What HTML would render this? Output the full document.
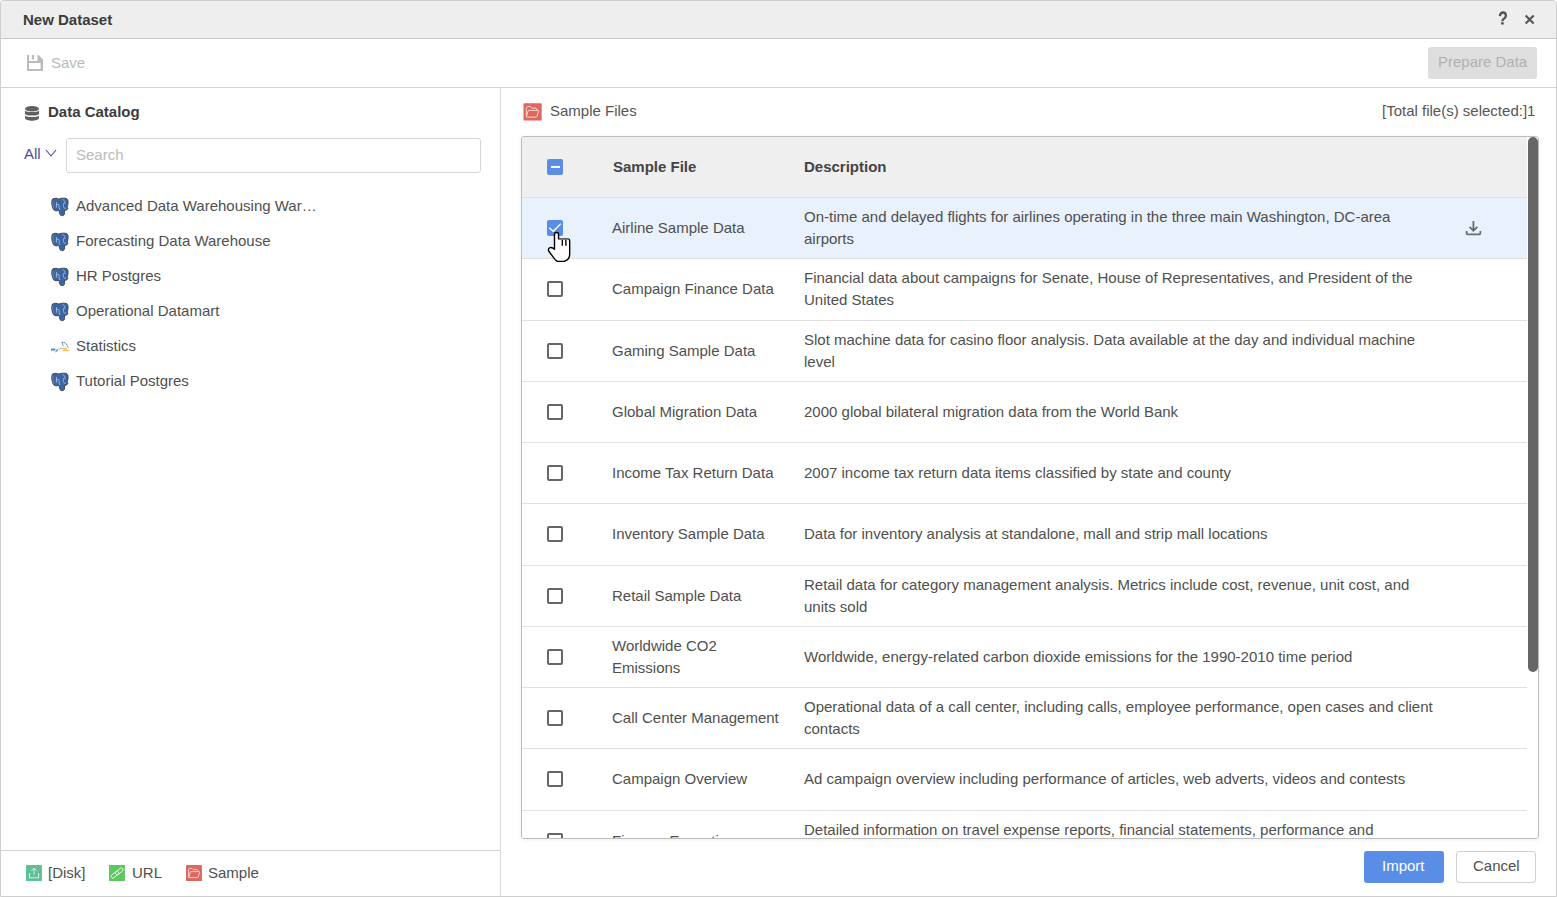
<!DOCTYPE html>
<html><head><meta charset="utf-8">
<style>
*{box-sizing:border-box;margin:0;padding:0}
html,body{width:1557px;height:897px;overflow:hidden;background:#fff;font-family:"Liberation Sans",sans-serif;color:#4f4f4f;font-size:15px}
.a{position:absolute;white-space:nowrap}
.t15{font-size:15px;line-height:17px}
.ico{position:absolute}
</style></head><body>
<div class="a" style="left:0;top:0;width:1557px;height:897px;border:1px solid #cecece;border-radius:3px 4px 0 0;background:#fff"></div>
<div class="a" style="left:1px;top:1px;width:1555px;height:37px;background:#eeeeee;border-radius:3px 3px 0 0"></div>
<div class="a" style="left:1px;top:38px;width:1555px;height:1px;background:#c9c9c9"></div>
<div class="a t15" style="left:23px;top:11px;font-weight:bold;color:#3b3b3b">New Dataset</div>
<!-- help / close -->
<svg class="ico" style="left:1497px;top:0px" width="60" height="60" viewBox="0 0 897 897"><path d="M42 240 C48 202 75 187 90 187 C120 187 133 210 133 236 C133 264 110 276 96 286 C84 294 81 302 81 318" stroke="#555" stroke-width="34" fill="none"/><circle cx="81" cy="350" r="21" fill="#555"/><path d="M428 232 L548 352 M548 232 L428 352" stroke="#555" stroke-width="32"/></svg>
<!-- toolbar -->
<svg class="ico" style="left:27px;top:55px" width="16" height="16" viewBox="0 0 16 16"><path d="M0 0 H11.5 L16 4.5 V16 H0 Z M2 0 V6 H10.5 V0 Z M4.8 0 V4.6 H7 V0 Z M2 8 V14 H13.6 V8 Z" fill="#bbb" fill-rule="evenodd"/></svg>
<div class="a t15" style="left:51px;top:54px;color:#bbb">Save</div>
<div class="a" style="left:1428px;top:47px;width:109px;height:32px;background:#dedede;border-radius:3px"></div>
<div class="a t15" style="left:1438px;top:53px;color:#b0b0b0">Prepare Data</div>
<div class="a" style="left:1px;top:87px;width:1555px;height:1px;background:#d3d3d3"></div>
<!-- left panel -->
<div class="a" style="left:500px;top:88px;width:1px;height:808px;background:#dcdcdc"></div>
<svg class="ico" style="left:25px;top:106px" width="14" height="15" viewBox="0 0 14 15"><ellipse cx="7" cy="2.8" rx="7" ry="2.8" fill="#606060"/><path d="M0 4.5 C1 6.5 13 6.5 14 4.5 V8 C13 10 1 10 0 8 Z" fill="#606060"/><path d="M0 9.5 C1 11.5 13 11.5 14 9.5 V12.2 C13 15.5 1 15.5 0 12.2 Z" fill="#606060"/></svg>
<div class="a t15" style="left:48px;top:103px;font-weight:bold;color:#3c3c3c">Data Catalog</div>
<div class="a t15" style="left:24px;top:145px;color:#4b4b9b">All</div>
<svg class="ico" style="left:44.5px;top:148.5px" width="12" height="9" viewBox="0 0 12 9"><path d="M1 1 L6 7 L11 1" stroke="#4b4b9b" stroke-width="1.1" fill="none"/></svg>
<div class="a" style="left:66px;top:138px;width:415px;height:35px;border:1px solid #d6d6d6;border-radius:3px"></div>
<div class="a t15" style="left:76px;top:146px;color:#bbb">Search</div>

<div class="a" style="left:51px;top:197px;width:18px;height:18px"><svg class="ico" style="left:-7px;top:-5px" width="30" height="30" viewBox="0 0 897 897"><path d="M250 215 C285 182 400 178 440 212 C480 188 600 170 680 198 C722 220 732 300 708 400 C698 440 692 468 716 500 C692 540 642 552 612 552 L618 640 C612 692 572 712 530 706 C482 700 466 660 460 620 L455 545 C420 562 340 582 290 532 C240 472 210 300 250 215 Z" fill="#3b65a2" stroke="#3d3d3d" stroke-width="26"/><path d="M372 300 V470 M374 395 C394 358 448 358 452 405 V470 C452 500 470 520 480 540" stroke="#c0d0ea" stroke-width="22" fill="none"/><path d="M552 232 C630 245 640 300 592 338 C570 356 574 410 586 466 M598 482 H660 M612 345 H648" stroke="#b8cae6" stroke-width="22" fill="none"/><path d="M272 255 C260 320 266 420 298 500" stroke="#7a98c8" stroke-width="20" fill="none"/></svg></div>
<div class="a t15" style="left:76px;top:197px;color:#4f4f4f">Advanced Data Warehousing War…</div>
<div class="a" style="left:51px;top:232px;width:18px;height:18px"><svg class="ico" style="left:-7px;top:-5px" width="30" height="30" viewBox="0 0 897 897"><path d="M250 215 C285 182 400 178 440 212 C480 188 600 170 680 198 C722 220 732 300 708 400 C698 440 692 468 716 500 C692 540 642 552 612 552 L618 640 C612 692 572 712 530 706 C482 700 466 660 460 620 L455 545 C420 562 340 582 290 532 C240 472 210 300 250 215 Z" fill="#3b65a2" stroke="#3d3d3d" stroke-width="26"/><path d="M372 300 V470 M374 395 C394 358 448 358 452 405 V470 C452 500 470 520 480 540" stroke="#c0d0ea" stroke-width="22" fill="none"/><path d="M552 232 C630 245 640 300 592 338 C570 356 574 410 586 466 M598 482 H660 M612 345 H648" stroke="#b8cae6" stroke-width="22" fill="none"/><path d="M272 255 C260 320 266 420 298 500" stroke="#7a98c8" stroke-width="20" fill="none"/></svg></div>
<div class="a t15" style="left:76px;top:232px;color:#4f4f4f">Forecasting Data Warehouse</div>
<div class="a" style="left:51px;top:267px;width:18px;height:18px"><svg class="ico" style="left:-7px;top:-5px" width="30" height="30" viewBox="0 0 897 897"><path d="M250 215 C285 182 400 178 440 212 C480 188 600 170 680 198 C722 220 732 300 708 400 C698 440 692 468 716 500 C692 540 642 552 612 552 L618 640 C612 692 572 712 530 706 C482 700 466 660 460 620 L455 545 C420 562 340 582 290 532 C240 472 210 300 250 215 Z" fill="#3b65a2" stroke="#3d3d3d" stroke-width="26"/><path d="M372 300 V470 M374 395 C394 358 448 358 452 405 V470 C452 500 470 520 480 540" stroke="#c0d0ea" stroke-width="22" fill="none"/><path d="M552 232 C630 245 640 300 592 338 C570 356 574 410 586 466 M598 482 H660 M612 345 H648" stroke="#b8cae6" stroke-width="22" fill="none"/><path d="M272 255 C260 320 266 420 298 500" stroke="#7a98c8" stroke-width="20" fill="none"/></svg></div>
<div class="a t15" style="left:76px;top:267px;color:#4f4f4f">HR Postgres</div>
<div class="a" style="left:51px;top:302px;width:18px;height:18px"><svg class="ico" style="left:-7px;top:-5px" width="30" height="30" viewBox="0 0 897 897"><path d="M250 215 C285 182 400 178 440 212 C480 188 600 170 680 198 C722 220 732 300 708 400 C698 440 692 468 716 500 C692 540 642 552 612 552 L618 640 C612 692 572 712 530 706 C482 700 466 660 460 620 L455 545 C420 562 340 582 290 532 C240 472 210 300 250 215 Z" fill="#3b65a2" stroke="#3d3d3d" stroke-width="26"/><path d="M372 300 V470 M374 395 C394 358 448 358 452 405 V470 C452 500 470 520 480 540" stroke="#c0d0ea" stroke-width="22" fill="none"/><path d="M552 232 C630 245 640 300 592 338 C570 356 574 410 586 466 M598 482 H660 M612 345 H648" stroke="#b8cae6" stroke-width="22" fill="none"/><path d="M272 255 C260 320 266 420 298 500" stroke="#7a98c8" stroke-width="20" fill="none"/></svg></div>
<div class="a t15" style="left:76px;top:302px;color:#4f4f4f">Operational Datamart</div>
<div class="a" style="left:51px;top:337px;width:18px;height:18px"><svg class="ico" style="left:-7px;top:-5px" width="30" height="30" viewBox="0 0 897 897"><path d="M215 565 L238 490 L272 555 L300 490 L322 565" stroke="#4f84b2" stroke-width="28" fill="none"/><path d="M345 505 L385 565 M425 500 L380 585 C370 600 350 598 335 590" stroke="#4f84b2" stroke-width="26" fill="none"/><path d="M455 530 C470 480 525 465 545 500 M560 515 C590 470 650 490 630 540 C620 560 590 560 570 545 M660 470 L665 550 L745 552" stroke="#ebb055" stroke-width="30" fill="none"/><path d="M520 310 C600 290 665 330 695 405 C705 432 712 452 722 470 M550 330 C558 380 568 412 590 432" stroke="#5b8fba" stroke-width="28" fill="none"/></svg></div>
<div class="a t15" style="left:76px;top:337px;color:#4f4f4f">Statistics</div>
<div class="a" style="left:51px;top:372px;width:18px;height:18px"><svg class="ico" style="left:-7px;top:-5px" width="30" height="30" viewBox="0 0 897 897"><path d="M250 215 C285 182 400 178 440 212 C480 188 600 170 680 198 C722 220 732 300 708 400 C698 440 692 468 716 500 C692 540 642 552 612 552 L618 640 C612 692 572 712 530 706 C482 700 466 660 460 620 L455 545 C420 562 340 582 290 532 C240 472 210 300 250 215 Z" fill="#3b65a2" stroke="#3d3d3d" stroke-width="26"/><path d="M372 300 V470 M374 395 C394 358 448 358 452 405 V470 C452 500 470 520 480 540" stroke="#c0d0ea" stroke-width="22" fill="none"/><path d="M552 232 C630 245 640 300 592 338 C570 356 574 410 586 466 M598 482 H660 M612 345 H648" stroke="#b8cae6" stroke-width="22" fill="none"/><path d="M272 255 C260 320 266 420 298 500" stroke="#7a98c8" stroke-width="20" fill="none"/></svg></div>
<div class="a t15" style="left:76px;top:372px;color:#4f4f4f">Tutorial Postgres</div>

<div class="a" style="left:1px;top:850px;width:499px;height:1px;background:#d3d3d3"></div>
<svg class="ico" style="left:22px;top:861px" width="24" height="24" viewBox="0 0 897 897"><rect x="150" y="148" width="595" height="597" rx="18" fill="#5fbf96"/><path d="M280 450 V625 H620 V450" stroke="#d9f1e5" stroke-width="38" fill="none"/><path d="M450 515 V290 M348 362 L450 270 L552 362" stroke="#d9f1e5" stroke-width="36" fill="none"/></svg>
<div class="a t15" style="left:48px;top:864px">[Disk]</div>
<svg class="ico" style="left:105px;top:861px" width="24" height="24" viewBox="0 0 897 897"><rect x="150" y="148" width="595" height="597" rx="10" fill="#5dc85f"/><g fill="none" stroke="#e4f6e4" stroke-width="34"><rect x="205" y="447" width="330" height="130" rx="65" transform="rotate(-38 370 512)"/><rect x="365" y="323" width="330" height="130" rx="65" transform="rotate(-38 530 388)"/></g></svg>
<div class="a t15" style="left:132px;top:864px">URL</div>
<svg class="ico" style="left:182px;top:861px" width="24" height="24" viewBox="0 0 897 897"><rect x="150" y="148" width="595" height="597" rx="18" fill="#df675d"/><g fill="none" stroke="#f8dcd8" stroke-width="34"><path d="M245 600 V335 C245 300 262 282 300 282 H380 L420 322 H560 C580 322 590 335 590 352 V385"/><path d="M250 612 L312 415 C316 402 324 398 338 398 H640 C660 398 664 410 660 425 L602 600 C598 612 590 620 575 620 H262 C252 620 248 615 250 612 Z"/></g></svg>
<div class="a t15" style="left:208px;top:864px">Sample</div>
<!-- right panel -->
<svg class="ico" style="left:520px;top:100px" width="25" height="24" viewBox="0 0 934 897"><rect x="130" y="125" width="680" height="640" rx="22" fill="#df675d"/><g fill="none" stroke="#f8dcd8" stroke-width="36"><path d="M235 610 V330 C235 280 270 240 320 240 H380 L440 305 H600 C620 305 630 322 630 342 V385"/><path d="M240 628 L300 412 C305 396 316 390 332 390 H680 C700 390 706 405 700 422 L632 610 C624 630 612 640 592 640 H254 C244 640 238 635 240 628 Z"/></g></svg>
<div class="a t15" style="left:550px;top:102px;color:#555">Sample Files</div>
<div class="a t15" style="left:1382px;top:102px;color:#555">[Total file(s) selected:]1</div>
<div class="a" style="left:521px;top:136px;width:1018px;height:703px;border:1px solid #bdbdbd;border-radius:3px;overflow:hidden;box-shadow:0 1px 4px rgba(0,0,0,0.07)">
<div class="a" style="left:0;top:0;width:1005px;height:61px;background:#efefef;border-bottom:1px solid #e0e0e0"></div>

<div class="a" style="left:25px;top:22px;width:16px;height:16px;background:#5a8de6;border-radius:2px"><div class="a" style="left:3.5px;top:7px;width:9px;height:2px;background:#fff"></div></div>
<div class="a t15" style="left:91px;top:21px;font-weight:bold;color:#444">Sample File</div>
<div class="a t15" style="left:282px;top:21px;font-weight:bold;color:#444">Description</div>
<div class="a" style="left:0;top:61px;width:1005px;height:61px;background:#e9f1fc;border-bottom:1px solid #e0e0e0"></div>
<div class="a" style="left:25px;top:83px;width:16px;height:16px;background:#5a8de6;border-radius:2px"><svg class="ico" style="left:-7px;top:-6px" width="36" height="52" viewBox="0 0 621 897"><path d="M158 238 L230 298 L358 168" stroke="#fff" stroke-width="22" fill="none"/></svg></div>
<div class="a" style="left:90px;top:80px;line-height:22px;color:#4f4f4f">Airline Sample Data</div>
<div class="a" style="left:282px;top:69px;line-height:22px;color:#4f4f4f">On-time and delayed flights for airlines operating in the three main Washington, DC-area<br>airports</div>
<svg class="ico" style="left:933px;top:73px" width="40" height="35" viewBox="0 0 1025 897"><path d="M472 285 V515 M372 435 L472 530 L572 435" stroke="#686b70" stroke-width="46" fill="none"/><path d="M298 540 V598 C298 615 310 627 327 627 H620 C637 627 650 615 650 598 V540" stroke="#686b70" stroke-width="46" fill="none"/></svg>
<div class="a" style="left:0;top:122px;width:1005px;height:62px;background:#fff;border-bottom:1px solid #e0e0e0"></div>
<div class="a" style="left:25px;top:144px;width:16px;height:16px;border:2px solid #666;border-radius:2px"></div>
<div class="a" style="left:90px;top:141px;line-height:22px;color:#4f4f4f">Campaign Finance Data</div>
<div class="a" style="left:282px;top:130px;line-height:22px;color:#4f4f4f">Financial data about campaigns for Senate, House of Representatives, and President of the<br>United States</div>
<div class="a" style="left:0;top:184px;width:1005px;height:61px;background:#fff;border-bottom:1px solid #e0e0e0"></div>
<div class="a" style="left:25px;top:206px;width:16px;height:16px;border:2px solid #666;border-radius:2px"></div>
<div class="a" style="left:90px;top:203px;line-height:22px;color:#4f4f4f">Gaming Sample Data</div>
<div class="a" style="left:282px;top:192px;line-height:22px;color:#4f4f4f">Slot machine data for casino floor analysis. Data available at the day and individual machine<br>level</div>
<div class="a" style="left:0;top:245px;width:1005px;height:61px;background:#fff;border-bottom:1px solid #e0e0e0"></div>
<div class="a" style="left:25px;top:267px;width:16px;height:16px;border:2px solid #666;border-radius:2px"></div>
<div class="a" style="left:90px;top:264px;line-height:22px;color:#4f4f4f">Global Migration Data</div>
<div class="a" style="left:282px;top:264px;line-height:22px;color:#4f4f4f">2000 global bilateral migration data from the World Bank</div>
<div class="a" style="left:0;top:306px;width:1005px;height:61px;background:#fff;border-bottom:1px solid #e0e0e0"></div>
<div class="a" style="left:25px;top:328px;width:16px;height:16px;border:2px solid #666;border-radius:2px"></div>
<div class="a" style="left:90px;top:325px;line-height:22px;color:#4f4f4f">Income Tax Return Data</div>
<div class="a" style="left:282px;top:325px;line-height:22px;color:#4f4f4f">2007 income tax return data items classified by state and county</div>
<div class="a" style="left:0;top:367px;width:1005px;height:62px;background:#fff;border-bottom:1px solid #e0e0e0"></div>
<div class="a" style="left:25px;top:389px;width:16px;height:16px;border:2px solid #666;border-radius:2px"></div>
<div class="a" style="left:90px;top:386px;line-height:22px;color:#4f4f4f">Inventory Sample Data</div>
<div class="a" style="left:282px;top:386px;line-height:22px;color:#4f4f4f">Data for inventory analysis at standalone, mall and strip mall locations</div>
<div class="a" style="left:0;top:429px;width:1005px;height:61px;background:#fff;border-bottom:1px solid #e0e0e0"></div>
<div class="a" style="left:25px;top:451px;width:16px;height:16px;border:2px solid #666;border-radius:2px"></div>
<div class="a" style="left:90px;top:448px;line-height:22px;color:#4f4f4f">Retail Sample Data</div>
<div class="a" style="left:282px;top:437px;line-height:22px;color:#4f4f4f">Retail data for category management analysis. Metrics include cost, revenue, unit cost, and<br>units sold</div>
<div class="a" style="left:0;top:490px;width:1005px;height:61px;background:#fff;border-bottom:1px solid #e0e0e0"></div>
<div class="a" style="left:25px;top:512px;width:16px;height:16px;border:2px solid #666;border-radius:2px"></div>
<div class="a" style="left:90px;top:498px;line-height:22px;color:#4f4f4f">Worldwide CO2<br>Emissions</div>
<div class="a" style="left:282px;top:509px;line-height:22px;color:#4f4f4f">Worldwide, energy-related carbon dioxide emissions for the 1990-2010 time period</div>
<div class="a" style="left:0;top:551px;width:1005px;height:61px;background:#fff;border-bottom:1px solid #e0e0e0"></div>
<div class="a" style="left:25px;top:573px;width:16px;height:16px;border:2px solid #666;border-radius:2px"></div>
<div class="a" style="left:90px;top:570px;line-height:22px;color:#4f4f4f">Call Center Management</div>
<div class="a" style="left:282px;top:559px;line-height:22px;color:#4f4f4f">Operational data of a call center, including calls, employee performance, open cases and client<br>contacts</div>
<div class="a" style="left:0;top:612px;width:1005px;height:62px;background:#fff;border-bottom:1px solid #e0e0e0"></div>
<div class="a" style="left:25px;top:634px;width:16px;height:16px;border:2px solid #666;border-radius:2px"></div>
<div class="a" style="left:90px;top:631px;line-height:22px;color:#4f4f4f">Campaign Overview</div>
<div class="a" style="left:282px;top:631px;line-height:22px;color:#4f4f4f">Ad campaign overview including performance of articles, web adverts, videos and contests</div>
<div class="a" style="left:0;top:674px;width:1005px;height:61px;background:#fff;border-bottom:1px solid #e0e0e0"></div>
<div class="a" style="left:25px;top:696px;width:16px;height:16px;border:2px solid #666;border-radius:2px"></div>
<div class="a" style="left:90px;top:693px;line-height:22px;color:#4f4f4f">Finance Executive</div>
<div class="a" style="left:282px;top:682px;line-height:22px;color:#4f4f4f">Detailed information on travel expense reports, financial statements, performance and<br>budget</div>
<div class="a" style="left:1006px;top:0;width:10px;height:535px;background:#666;border-radius:5px"></div>
</div>
<svg class="ico" style="left:540px;top:214px" width="36" height="52" viewBox="0 0 621 897"><path d="M250 610 V345 C250 325 262 318 285 318 C308 318 320 325 320 345 V430 H482 C502 430 512 445 512 470 V690 C512 740 492 785 445 805 L420 818 H300 L262 788 C230 745 200 705 162 655 C136 622 140 588 175 580 C200 574 232 592 250 610 Z" fill="#fff" stroke="#000" stroke-width="24" stroke-linejoin="round"/><path d="M385 440 V548 M447 440 V548" stroke="#000" stroke-width="24"/><path d="M330 432 H500" stroke="#888" stroke-width="20"/></svg>
<div class="a" style="left:1364px;top:851px;width:80px;height:32px;background:#5a8de6;border-radius:3px"></div>
<div class="a t15" style="left:1382px;top:857px;color:#fff">Import</div>
<div class="a" style="left:1456px;top:851px;width:80px;height:32px;background:#fff;border:1px solid #d0d0d0;border-radius:3px"></div>
<div class="a t15" style="left:1473px;top:857px;color:#4f4f4f">Cancel</div>
</body></html>
